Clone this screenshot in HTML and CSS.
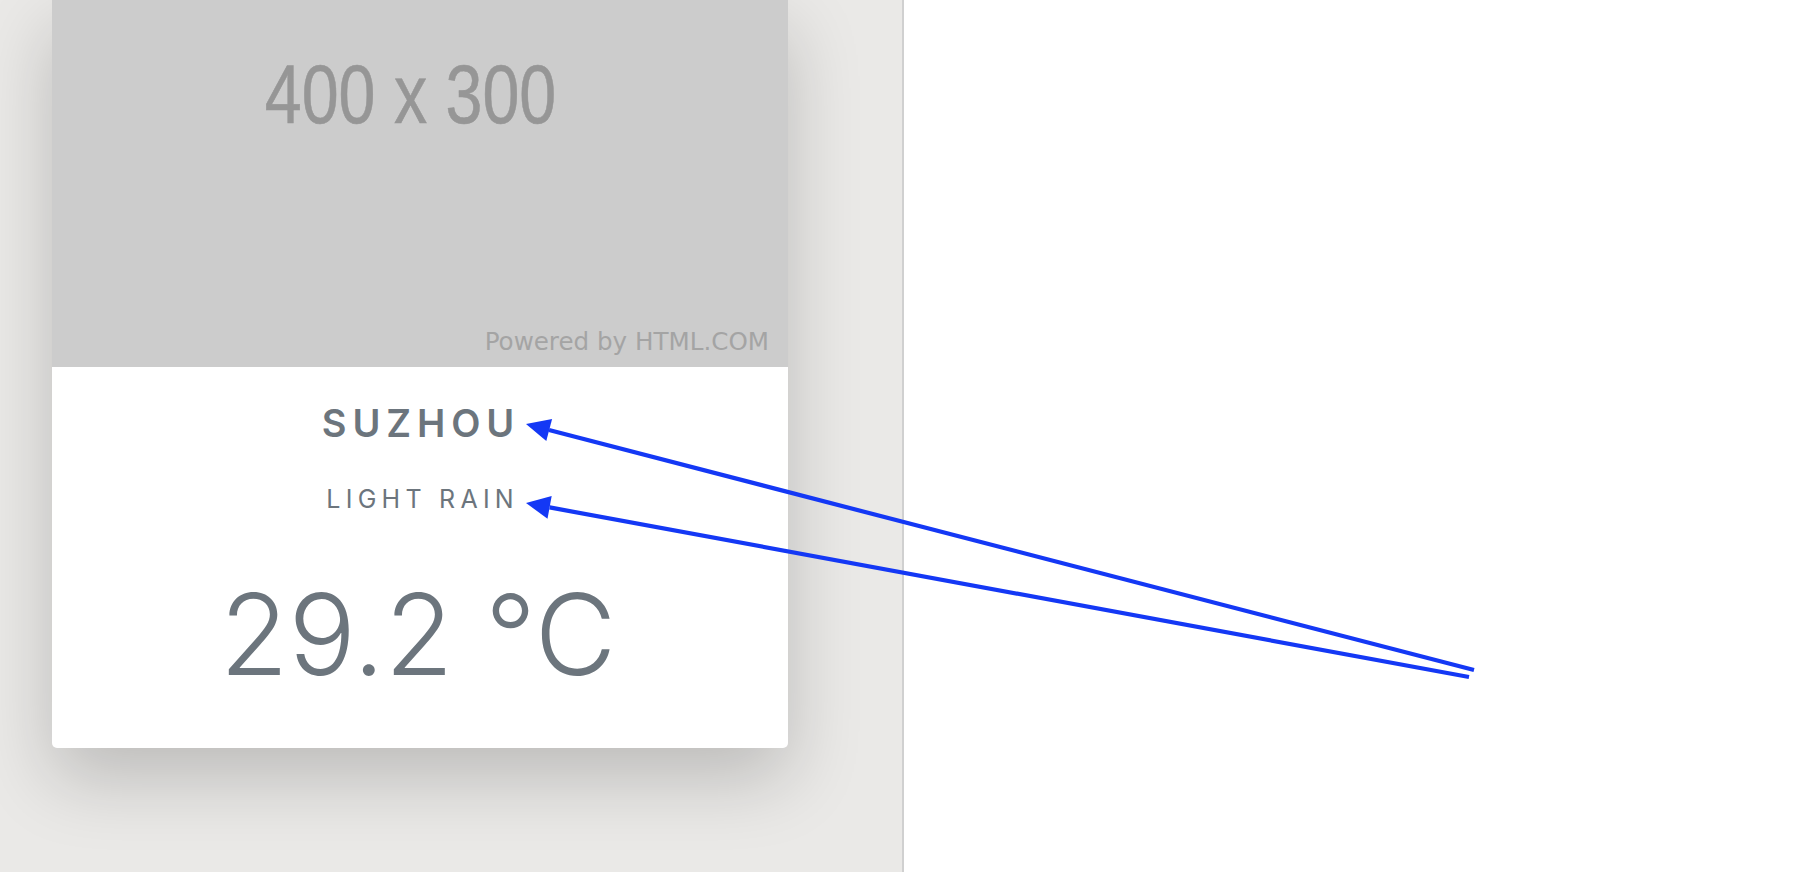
FILE: index.html
```html
<!DOCTYPE html>
<html lang="en">
<head>
<meta charset="utf-8">
<title>Weather card</title>
<link rel="stylesheet" href="styles.css">
</head>
<body>
<div class="layout">
  <section class="preview">
    <article class="card">
      <div class="card-img">
        <div class="ph-label"><span class="ph-text">400 x 300</span></div>
        <div class="ph-credit">Powered by HTML.COM</div>
      </div>
      <div class="card-body">
        <h5 class="city">SUZHOU</h5>
        <p class="cond">LIGHT RAIN</p>
        <p class="temp">29.2 °C</p>
      </div>
    </article>
  </section>
  <section class="blank"></section>
</div>
<svg class="arrows" width="1794" height="872" viewBox="0 0 1794 872" aria-hidden="true">
  <line x1="1474" y1="670" x2="549" y2="430" />
  <polygon points="526,424 552.1,418.9 546.3,441.1" />
  <line x1="1469" y1="677" x2="549.6" y2="507.4" />
  <polygon points="526,503 551.7,496.1 547.5,518.7" />
</svg>
</body>
</html>
```
FILE: styles.css
```css
html, body {
  margin: 0;
  padding: 0;
  width: 1794px;
  height: 872px;
  overflow: hidden;
  background: #ffffff;
  font-family: Inter, "Noto Sans", sans-serif;
}

.layout {
  display: flex;
  height: 872px;
}

.preview {
  flex: 0 0 904px;
  width: 904px;
  box-sizing: border-box;
  background: #eae9e7;
  border-right: 2px solid #d0d0d0;
  padding-left: 52px;
  overflow: hidden;
}

.blank {
  flex: 1;
  background: #ffffff;
}

.card {
  width: 736px;
  background: #ffffff;
  border-radius: 0 0 5px 5px;
  box-shadow: 0 30px 75px rgba(0, 0, 0, 0.2);
  overflow: hidden;
}

.card-img {
  height: 367px;
  background: #cccccc;
  display: flex;
  flex-direction: column;
  box-sizing: border-box;
}

.ph-label {
  display: flex;
  justify-content: center;
  padding-top: 44px;
  padding-right: 20px;
  height: 100px;
}

.ph-text {
  display: inline-block;
  font-family: "Liberation Sans", Arial, sans-serif;
  font-size: 84px;
  line-height: 100px;
  color: #969696;
  transform: scaleX(0.79);
  white-space: pre;
  -webkit-text-stroke: 0.6px #969696;
}

.ph-credit {
  margin-top: auto;
  align-self: flex-end;
  padding: 0 19px 11px 0;
  font-family: "DejaVu Sans", sans-serif;
  font-size: 24.6px;
  line-height: 28px;
  color: #a4a4a4;
}

.card-body {
  padding: 33px 0 46px;
  text-align: center;
  color: #6c757d;
}

.city {
  margin: 0;
  font-size: 38px;
  line-height: 46px;
  font-weight: 600;
  letter-spacing: 0.155em;
  padding-left: 0.05em;
}

.cond {
  margin: 38px 0 0;
  font-size: 25px;
  line-height: 30px;
  font-weight: 400;
  letter-spacing: 0.21em;
  padding-left: 0.21em;
}

.temp {
  margin: 52px 0 0;
  padding-right: 4px;
  font-size: 112px;
  line-height: 136px;
  font-weight: 300;
}

.arrows {
  position: absolute;
  left: 0;
  top: 0;
  pointer-events: none;
}

.arrows line {
  stroke: #1438f5;
  stroke-width: 4.2;
}

.arrows polygon {
  fill: #1438f5;
}
```
